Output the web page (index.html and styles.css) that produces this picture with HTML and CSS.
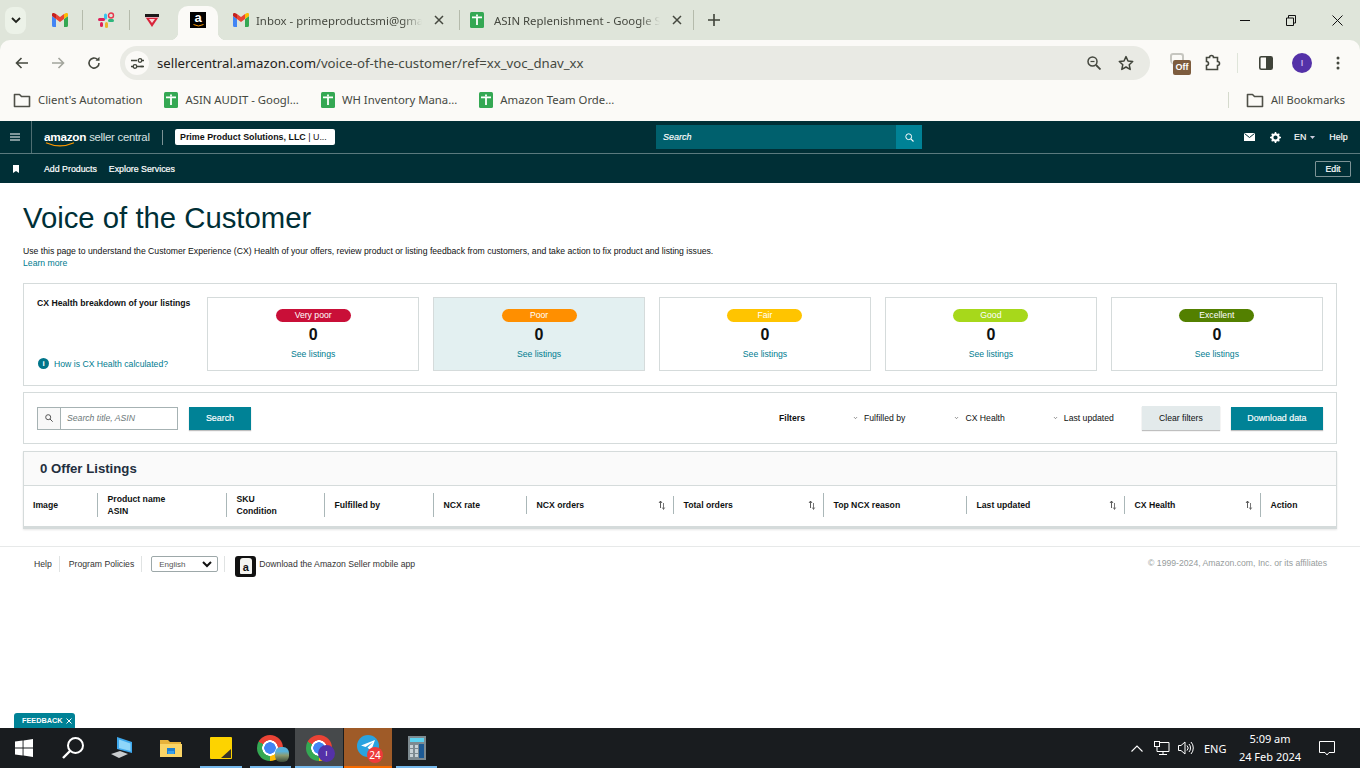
FILE: index.html
```html
<!DOCTYPE html>
<html lang="en">
<head>
<meta charset="utf-8">
<title>Voice of the Customer</title>
<link rel="stylesheet" href="styles.css">
</head>
<body>
<svg class="sprite" aria-hidden="true">
  <symbol id="sheets" viewBox="0 0 14 16"><rect width="14" height="16" rx="1.500" fill="#34a853"/><path d="M2 4.500h10v1.800H7.900V13H6.100V6.300H2z" fill="#fff"/><path d="M6.100 2.500h1.800v2H6.100z" fill="#fff"/></symbol>
  <symbol id="gmail" viewBox="0 0 16 14"><path d="M0 3v9.500A1.500 1.500 0 0 0 1.500 14H4V6z" fill="#4285f4"/><path d="M16 3v9.500a1.500 1.500 0 0 1-1.500 1.500H12V6z" fill="#34a853"/><path d="M4 6 8 9l4-3V1l-4 3-4-3z" fill="#ea4335"/><path d="M0 3 4 6V1L2.400.2A1.500 1.500 0 0 0 0 1.500z" fill="#c5221f"/><path d="M16 3 12 6V1l1.600-.8A1.500 1.500 0 0 1 16 1.500z" fill="#fbbc04"/></symbol>
  <symbol id="folder" viewBox="0 0 18 16"><path d="M1.500 2.500h5l2 2h8v10h-15z" fill="none" stroke="#4f5048" stroke-width="1.600" stroke-linejoin="round"/></symbol>
  <symbol id="close" viewBox="0 0 10 10"><path d="M1 1l8 8M9 1l-8 8" stroke="#45483f" stroke-width="1.500" fill="none"/></symbol>
  <symbol id="sort" viewBox="0 0 8 10"><path d="M2.500 8V1.500M1 3l1.500-2L4 3" stroke="#333" stroke-width=".8" fill="none"/><path d="M5.500 3v6M4.300 7.500 5.500 9.500l1.200-2" stroke="#555" stroke-width=".8" fill="none"/></symbol>
  <symbol id="caret" viewBox="0 0 8 6"><path d="M1.500 1.500 4 4l2.500-2.500" stroke="#555" fill="none"/></symbol>
</svg>

<div class="screen">
  <header class="browser">
    <div class="tabstrip">
      <button class="tab-menu"><svg width="10" height="7" viewBox="0 0 10 7"><path d="M1 1l4 4 4-4" fill="none" stroke="#20231d" stroke-width="1.800"/></svg></button>
      <div class="pin pin-first"><svg class="ic-gmail"><use href="#gmail"/></svg></div>
      <i class="tab-sep"></i>
      <div class="pin pin-wide">
        <svg width="17" height="17" viewBox="0 0 17 17"><rect x="6" y="1.500" width="3" height="6" rx="1.500" fill="#36c5f0"/><rect x="0" y="6" width="7" height="3" rx="1.500" fill="#e01e5a"/><rect x="7" y="10" width="3" height="6" rx="1.500" fill="#ecb22e"/><rect x="10" y="7" width="6" height="3" rx="1.500" fill="#2eb67d"/><rect x="2" y="10" width="3" height="5" rx="1.500" fill="#e01e5a"/><circle cx="13" cy="3.500" r="2.500" fill="none" stroke="#e8384f" stroke-width="1.400"/></svg>
      </div>
      <i class="tab-sep"></i>
      <div class="pin"><svg width="16" height="16" viewBox="0 0 16 16"><path d="M2 6h12L8 15z" fill="#d8243a"/><path d="M1 2h14v3H1z" fill="#1c1a1a"/><path d="M1.500 5h13v1h-13z" fill="#e9a0b0"/><path d="M5 7h6L8 11z" fill="#f7d9d9"/></svg></div>
      <div class="tab-active"><span class="amz-fav"><b>a</b><svg width="11" height="3" viewBox="0 0 11 3"><path d="M.5.500Q5.500 3.500 10.500.500" stroke="#f90" stroke-width="1" fill="none"/></svg></span></div>
      <div class="tab tab-inbox"><svg class="ic-gmail"><use href="#gmail"/></svg><span class="tab-title">Inbox - primeproductsmi@gma</span><svg class="tab-x"><use href="#close"/></svg></div>
      <i class="tab-sep"></i>
      <div class="tab tab-sheet"><svg class="ic-sheet"><use href="#sheets"/></svg><span class="tab-title">ASIN Replenishment - Google S</span><svg class="tab-x"><use href="#close"/></svg></div>
      <i class="tab-sep"></i>
      <svg class="new-tab" width="12" height="12" viewBox="0 0 12 12"><path d="M6 0v12M0 6h12" stroke="#3f4339" stroke-width="1.600"/></svg>
      <div class="win-controls">
        <svg width="10" height="10" viewBox="0 0 10 10"><path d="M0 5.500h10" stroke="#111"/></svg>
        <svg width="10" height="11" viewBox="0 0 10 11"><path d="M.5 3h7v7.500h-7zM2.500 3V.500h7v7.500H7.500" fill="none" stroke="#111"/></svg>
        <svg width="11" height="11" viewBox="0 0 11 11"><path d="M.5.500l10 10M10.500.500l-10 10" stroke="#111"/></svg>
      </div>
    </div>

    <div class="toolbar">
      <div class="nav-buttons">
        <svg width="14" height="12" viewBox="0 0 14 12"><path d="M13 6H2M6.500 1 1.500 6l5 5" fill="none" stroke="#45483f" stroke-width="1.600"/></svg>
        <svg width="14" height="12" viewBox="0 0 14 12"><path d="M1 6h11M7.500 1l5 5-5 5" fill="none" stroke="#a3a59d" stroke-width="1.600"/></svg>
        <svg width="14" height="14" viewBox="0 0 14 14"><path d="M12 7a5 5 0 1 1-1.500-3.500" fill="none" stroke="#45483f" stroke-width="1.600"/><path d="M12.500 .8v4h-4z" fill="#45483f"/></svg>
      </div>
      <div class="omnibox">
        <span class="site-btn"><svg width="13" height="11" viewBox="0 0 13 11"><path d="M0 2.500h6M9.500 8.500H13" stroke="#3f4339" stroke-width="1.300"/><circle cx="9" cy="2.500" r="1.800" fill="none" stroke="#3f4339" stroke-width="1.300"/><circle cx="4" cy="8.500" r="1.800" fill="none" stroke="#3f4339" stroke-width="1.300"/><path d="M0 8.500h2M11 2.500h2M6 8.500h6" stroke="#3f4339" stroke-width="1.300"/></svg></span>
        <span class="url">sellercentral.amazon.com<span class="url-path">/voice-of-the-customer/ref=xx_voc_dnav_xx</span></span>
        <span class="omni-icons">
          <svg width="14" height="14" viewBox="0 0 14 14"><circle cx="5.500" cy="5.500" r="4.500" fill="none" stroke="#45483f" stroke-width="1.500"/><path d="M9 9l4.500 4.500" stroke="#45483f" stroke-width="1.800"/><path d="M3.500 5.500h4" stroke="#45483f" stroke-width="1.200"/></svg>
          <svg width="16" height="16" viewBox="0 0 16 16"><path d="M8 1.600l2 4.400 4.700.5-3.500 3.200 1 4.700L8 12l-4.200 2.400 1-4.700L1.300 6.500 6 6z" fill="none" stroke="#3f4339" stroke-width="1.500" stroke-linejoin="round"/></svg>
        </span>
      </div>
      <div class="ext-icons">
        <span class="ext-off"><span class="off-cup"></span><b class="off-label">Off</b></span>
        <svg class="ext-puzzle" width="16" height="18" viewBox="0 0 16 18"><path d="M1.500 3.500h3a2 2 0 0 1 4 0h4v4a2 2 0 0 1 0 4v4h-11v-4a2 2 0 0 0 0-4z" fill="none" stroke="#45483f" stroke-width="1.600"/></svg>
        <i class="ext-sep"></i>
        <svg class="ext-panel" width="14" height="14" viewBox="0 0 14 14"><rect x=".8" y=".8" width="12.400" height="12.400" rx="1.500" fill="#fbfaf7" stroke="#3f4339" stroke-width="1.600"/><rect x="7" y="1" width="6" height="12" fill="#3f4339"/></svg>
        <span class="avatar">I</span>
        <svg class="ext-dots" width="4" height="14" viewBox="0 0 4 14"><circle cx="2" cy="2" r="1.500" fill="#45483f"/><circle cx="2" cy="7" r="1.500" fill="#45483f"/><circle cx="2" cy="12" r="1.500" fill="#45483f"/></svg>
      </div>
    </div>

    <div class="bookmarks">
      <span class="bm bm-first"><svg class="ic-folder"><use href="#folder"/></svg>Client's Automation</span>
      <span class="bm bm-s"><svg class="ic-sheet"><use href="#sheets"/></svg>ASIN AUDIT - Googl...</span>
      <span class="bm bm-s"><svg class="ic-sheet"><use href="#sheets"/></svg>WH Inventory Mana...</span>
      <span class="bm bm-s"><svg class="ic-sheet"><use href="#sheets"/></svg>Amazon Team Orde...</span>
      <i class="bm-sep"></i>
      <span class="bm bm-all"><svg class="ic-folder"><use href="#folder"/></svg>All Bookmarks</span>
    </div>
  </header>

  <div class="page">
    <nav class="sc-top">
      <span class="burger"><svg width="10" height="8" viewBox="0 0 10 8"><path d="M0 1h10M0 4h10M0 7h10" stroke="#fff" stroke-width="1.100"/></svg></span>
      <span class="logo"><span class="logo-mark"><b>amazon</b><svg width="30" height="5" viewBox="0 0 30 5"><path d="M1 .8Q15 7 29 .8" fill="none" stroke="#f90" stroke-width="1.100"/></svg></span><span class="logo-text">seller central</span></span>
      <i class="logo-sep"></i>
      <span class="account">Prime Product Solutions, LLC <span class="account-more">| U...</span></span>
      <div class="sc-search">
        <span class="sc-search-text">Search</span>
        <span class="sc-search-btn"><svg width="9" height="9" viewBox="0 0 9 9"><circle cx="3.700" cy="3.700" r="2.900" fill="none" stroke="#fff"/><path d="M5.800 5.800 8.500 8.500" stroke="#fff" stroke-width="1.100"/></svg></span>
      </div>
      <div class="sc-right">
        <svg class="sc-mail" width="11" height="8" viewBox="0 0 11 8"><path d="M0 0h11v8H0z" fill="#fff"/><path d="M.5.500 5.500 4.500l5-4" fill="none" stroke="#002f36"/></svg>
        <svg class="sc-gear" width="11" height="11" viewBox="0 0 11 11"><circle cx="5.500" cy="5.500" r="3.200" fill="none" stroke="#fff" stroke-width="2.200"/><path d="M5.500 0v11M0 5.500h11M1.700 1.700l7.600 7.600M9.300 1.700l-7.600 7.600" stroke="#fff" stroke-width="1.500" stroke-dasharray="2 7"/></svg>
        <span class="sc-lang">EN</span><svg class="sc-caret" width="5" height="3" viewBox="0 0 5 3"><path d="M0 0h5L2.500 3z" fill="#ccd"/></svg>
        <span class="sc-help">Help</span>
      </div>
    </nav>
    <nav class="sc-sub">
      <svg class="sc-pin" width="6" height="8" viewBox="0 0 6 8"><path d="M0 0h6v8L3 6 0 8z" fill="#fff"/></svg>
      <a class="sc-link sc-link-first">Add Products</a>
      <a class="sc-link">Explore Services</a>
      <span class="sc-edit">Edit</span>
    </nav>

    <main class="content">
      <h1 class="title">Voice of the Customer</h1>
      <p class="intro">Use this page to understand the Customer Experience (CX) Health of your offers, review product or listing feedback from customers, and take action to fix product and listing issues.<br><a class="link">Learn more</a></p>

      <section class="panel health">
        <div class="health-side">
          <strong class="health-title">CX Health breakdown of your listings</strong>
          <a class="link health-help"><span class="info-dot">i</span>How is CX Health calculated?</a>
        </div>
        <div class="health-cards">
          <div class="hcard"><span class="pill pill-vpoor">Very poor</span><b class="count">0</b><a class="link">See listings</a></div>
          <div class="hcard hcard-on"><span class="pill pill-poor">Poor</span><b class="count">0</b><a class="link">See listings</a></div>
          <div class="hcard"><span class="pill pill-fair">Fair</span><b class="count">0</b><a class="link">See listings</a></div>
          <div class="hcard"><span class="pill pill-good">Good</span><b class="count">0</b><a class="link">See listings</a></div>
          <div class="hcard"><span class="pill pill-exc">Excellent</span><b class="count">0</b><a class="link">See listings</a></div>
        </div>
      </section>

      <section class="panel filters">
        <div class="searchbox">
          <span class="searchbox-icon"><svg width="8" height="8" viewBox="0 0 8 8"><circle cx="3.200" cy="3.200" r="2.500" fill="none" stroke="#555"/><path d="M5 5l2.700 2.700" stroke="#555"/></svg></span>
          <span class="searchbox-text">Search title, ASIN</span>
        </div>
        <span class="btn btn-primary btn-search">Search</span>
        <strong class="filters-label">Filters</strong>
        <span class="filter filter-a"><svg class="ic-caret"><use href="#caret"/></svg>Fulfilled by</span>
        <span class="filter filter-b"><svg class="ic-caret"><use href="#caret"/></svg>CX Health</span>
        <span class="filter filter-c"><svg class="ic-caret"><use href="#caret"/></svg>Last updated</span>
        <span class="btn btn-clear">Clear filters</span>
        <span class="btn btn-primary btn-download">Download data</span>
      </section>

      <section class="panel listings">
        <h2 class="listings-head">0 Offer Listings</h2>
        <div class="cols">
          <div class="col col-first"><span>Image</span></div>
          <div class="col"><span>Product name<br>ASIN</span></div>
          <div class="col"><span>SKU<br>Condition</span></div>
          <div class="col"><span>Fulfilled by</span></div>
          <div class="col"><span>NCX rate</span></div>
          <div class="col col-sort"><span>NCX orders</span><svg class="ic-sort"><use href="#sort"/></svg></div>
          <div class="col col-sort"><span>Total orders</span><svg class="ic-sort"><use href="#sort"/></svg></div>
          <div class="col"><span>Top NCX reason</span></div>
          <div class="col col-sort"><span>Last updated</span><svg class="ic-sort"><use href="#sort"/></svg></div>
          <div class="col col-sort"><span>CX Health</span><svg class="ic-sort"><use href="#sort"/></svg></div>
          <div class="col"><span>Action</span></div>
        </div>
      </section>
    </main>

    <footer class="foot">
      <a class="foot-link foot-help">Help</a>
      <a class="foot-link foot-policy">Program Policies</a>
      <span class="foot-select">English<svg width="10" height="7" viewBox="0 0 10 7"><path d="M1 1l4 4 4-4" fill="none" stroke="#111" stroke-width="2"/></svg></span>
      <span class="foot-app"><span class="foot-app-icon"><b>a</b></span>Download the Amazon Seller mobile app</span>
      <span class="foot-copy">© 1999-2024, Amazon.com, Inc. or its affiliates</span>
    </footer>

    <div class="feedback">FEEDBACK<svg width="6" height="6" viewBox="0 0 6 6"><path d="M.5.500l5 5M5.500.500l-5 5" stroke="#fff"/></svg></div>
  </div>

  <footer class="taskbar">
    <span class="task task-start"><svg width="18" height="18" viewBox="0 0 18 18"><path d="M0 2.600 7.600 1.500v7H0zM8.500 1.400 18 0v8.500H8.500zM0 9.500h7.600v7L0 15.400zM8.500 9.500H18V18l-9.500-1.400z" fill="#fff"/></svg></span>
    <span class="task"><svg width="24" height="24" viewBox="0 0 24 24"><circle cx="14.500" cy="9.500" r="7.500" fill="none" stroke="#fff" stroke-width="2"/><path d="M9 15l-7 7" stroke="#fff" stroke-width="2.400"/></svg></span>
    <span class="task"><svg width="24" height="22" viewBox="0 0 24 22"><path d="M7 0l15 5v11L7 12z" fill="#3fa9ee"/><path d="M9 2.500 20.500 6.500v7.500L9 11z" fill="#8fd6fa"/><path d="M1 17l9-3 8 3-9 4z" fill="#c9ccce"/></svg></span>
    <span class="task"><svg width="22" height="18" viewBox="0 0 22 18"><path d="M0 1h8l2 2h11v14H0z" fill="#e8b33b"/><path d="M0 5h22v13H0z" fill="#fbd566"/><path d="M7 9h8v6h-2v-3H9v3H7z" fill="#1f7fd0"/><path d="M8 12h6v3H8z" fill="#3aa1ea"/></svg></span>
    <span class="task task-line"><svg width="22" height="22" viewBox="0 0 22 22"><path d="M1 0h20a1 1 0 0 1 1 1v20a1 1 0 0 1-1 1H1a1 1 0 0 1-1-1V1a1 1 0 0 1 1-1z" fill="#fdd300"/><path d="M21 12v9H11z" fill="#37342b"/></svg></span>
    <span class="task task-line"><span class="chrome"></span><span class="photo-badge"></span></span>
    <span class="task task-line task-active"><span class="chrome"></span><span class="profile-badge">I</span></span>
    <span class="task task-line task-tg"><span class="tg"><svg width="14" height="12" viewBox="0 0 14 12"><path d="M0 5.500 14 0 10 11 6.500 7.500 12 2 4.500 7z" fill="#fff"/></svg></span><span class="tg-badge">24</span></span>
    <span class="task task-line"><span class="calc"><i class="calc-screen"></i><i class="calc-keys"></i></span></span>
    <div class="tray">
      <svg class="tray-up" width="12" height="7" viewBox="0 0 12 7"><path d="M.5 6.500 6 1l5.500 5.500" fill="none" stroke="#fff" stroke-width="1.100"/></svg>
      <svg class="tray-net" width="16" height="15" viewBox="0 0 16 15"><path d="M3 1.500h12v9H3zM9 10.500v3M5 13.500h8" fill="none" stroke="#fff"/><rect x=".5" y=".5" width="5" height="5" fill="#191c1f" stroke="#fff"/></svg>
      <svg class="tray-vol" width="16" height="14" viewBox="0 0 16 14"><path d="M.5 4.500h2.500L7 1v12L3 9.500H.5z" fill="none" stroke="#fff"/><path d="M9 4.500a3.500 3.500 0 0 1 0 5M11 3a6 6 0 0 1 0 8M13 1a9 9 0 0 1 0 12" fill="none" stroke="#fff"/></svg>
      <span class="tray-lang">ENG</span>
      <span class="clock">5:09 am<br>24 Feb 2024</span>
      <svg class="tray-note" width="16" height="15" viewBox="0 0 16 15"><path d="M.5.500h15v11H10l-2 2.500L6 11.500H.5z" fill="none" stroke="#fff"/></svg>
    </div>
  </footer>
</div>
</body>
</html>
```

FILE: styles.css
```css
* { box-sizing: border-box; }
html, body { margin: 0; padding: 0; height: 100%; overflow: hidden; }
body { font-family: "Liberation Sans", Arial, sans-serif; color: #0f1111; background: #fff; }
svg { display: block; flex: none; }
a { color: inherit; }
.sprite { position: absolute; width: 0; height: 0; }
.screen { width: 1360px; height: 768px; display: flex; flex-direction: column; }

/* browser chrome */
.browser { height: 121px; background: #dfe5da; font-family: "Noto Sans", "Open Sans", sans-serif; color: #45483f; flex: none; }
.tabstrip { height: 40px; display: flex; align-items: center; padding-left: 5px; }
.tab-menu { width: 21px; height: 27px; border: 0; padding: 0; border-radius: 8px; background: #ecf2e8; display: flex; align-items: center; justify-content: center; }
.pin { width: 44px; height: 40px; display: flex; align-items: center; justify-content: center; }
.pin-first { margin-left: 12px; }
.pin-wide { width: 46px; }
.ic-gmail { width: 16px; height: 14px; }
.ic-sheet { width: 14px; height: 16px; }
.tab-sep { width: 1px; height: 20px; background: #b5bbac; flex: none; }
.tab-active { width: 40px; height: 34px; margin: 6px 0 0 4px; border-radius: 10px 10px 0 0; background: #fbfaf7; display: flex; justify-content: center; padding-top: 6px; position: relative; }
.tab-active::before, .tab-active::after { content: ""; position: absolute; bottom: 0; width: 8px; height: 8px; }
.tab-active::before { left: -8px; background: radial-gradient(circle at 0 0, transparent 8px, #fbfaf7 8.500px); }
.tab-active::after { right: -8px; background: radial-gradient(circle at 100% 0, transparent 8px, #fbfaf7 8.500px); }
.amz-fav { width: 16px; height: 16px; background: #000; display: flex; flex-direction: column; align-items: center; color: #fff; font: 700 13px/12px "Liberation Sans", sans-serif; }
.tab { height: 40px; display: flex; align-items: center; font-size: 11.400px; }
.tab-inbox { width: 241px; padding-left: 15px; }
.tab-sheet { width: 233px; padding-left: 10px; }
.tab-title { width: 166px; margin-left: 7px; white-space: nowrap; -webkit-mask-image: linear-gradient(to right, #000 88%, transparent); mask-image: linear-gradient(to right, #000 88%, transparent); }
.tab-sheet .tab-title { margin-left: 10px; }
.tab-x { width: 10px; height: 10px; margin-left: 12px; }
.new-tab { margin-left: 14px; }
.win-controls { margin-left: auto; width: 120px; padding-right: 17px; display: flex; justify-content: space-between; align-items: center; }

.toolbar { height: 41px; background: #fbfaf7; border-radius: 10px 10px 0 0; display: flex; align-items: center; }
.nav-buttons { width: 120px; padding: 0 19px 0 15px; display: flex; justify-content: space-between; align-items: center; }
.omnibox { width: 1030px; height: 34px; margin-top: 5px; border-radius: 17px; background: #e9eae4; display: flex; align-items: center; padding: 0 16px 0 5px; }
.nav-buttons, .ext-icons { margin-top: 4px; }
.site-btn { width: 24px; height: 24px; border-radius: 50%; background: #fbfaf7; display: flex; align-items: center; justify-content: center; }
.url { margin-left: 8px; font-size: 13.200px; color: #1f2119; white-space: nowrap; }
.url-path { color: #45483f; }
.omni-icons { margin-left: auto; width: 47px; display: flex; justify-content: space-between; align-items: center; }
.ext-icons { flex: 1; display: flex; align-items: center; height: 34px; }
.ext-off { width: 21px; height: 21px; margin-left: 20px; position: relative; }
.off-cup { position: absolute; left: 0; top: 1px; width: 14px; height: 12px; border: 2px solid #c6c6c0; border-radius: 3px 3px 5px 5px; border-bottom: 0; }
.off-label { position: absolute; right: 0; bottom: -2px; width: 18px; height: 15px; border-radius: 2px; background: #7d5c3e; color: #fff; font: 700 9px/15px "Liberation Sans", sans-serif; text-align: center; }
.ext-puzzle { margin-left: 14px; }
.ext-sep { width: 1px; height: 20px; background: #dfe5da; margin-left: 16px; }
.ext-panel { margin-left: 21px; }
.avatar { width: 20px; height: 20px; margin-left: 19px; border-radius: 50%; background: #5431a8; color: #e8e0ff; font: 9px/20px "Liberation Sans", sans-serif; text-align: center; }
.ext-dots { margin-left: 24px; }

.bookmarks { height: 40px; background: #fbfaf7; display: flex; align-items: center; font-size: 11.350px; padding-bottom: 3px; }
.bm { display: flex; align-items: center; gap: 7px; white-space: nowrap; }
.ic-folder { width: 18px; height: 16px; }
.bm-first { margin-left: 13px; }
.bm-s { margin-left: 22px; }
.bm-sep { width: 1px; height: 16px; background: #d5dacd; margin-left: auto; }
.bm-all { margin-left: 17px; margin-right: 15px; font-size: 11px; }

/* seller central nav */
.page { flex: 1; position: relative; display: flex; flex-direction: column; min-height: 0; background: #fff; }
.sc-top { height: 33px; background: #002f36; border-bottom: 1px solid #5b7a7e; display: flex; align-items: center; color: #fff; flex: none; }
.burger { width: 32px; height: 32px; border-right: 1px solid #4f6e72; padding-left: 10px; display: flex; align-items: center; }
.logo { display: flex; align-items: flex-start; margin-left: 12px; width: 106px; height: 18px; padding-top: 2px; white-space: nowrap; }
.logo-mark { position: relative; display: block; font-size: 11.800px; line-height: 15px; letter-spacing: -.3px; }
.logo-mark svg { position: absolute; left: 1px; top: 12px; }
.logo-text { font-size: 11.300px; line-height: 15px; letter-spacing: -.25px; margin-left: 3px; color: #d9e2e3; }
.logo-sep { width: 1px; height: 15px; background: #7d9396; margin-left: 12px; }
.account { width: 160px; height: 16px; margin-left: 12px; background: #fff; border-radius: 2px; color: #111; font-size: 8.900px; font-weight: 700; line-height: 16px; padding-left: 5px; white-space: nowrap; }
.account-more { font-weight: 400; }
.sc-search { width: 266px; height: 24px; margin-left: 321px; background: #00606d; display: flex; align-items: center; justify-content: space-between; padding-left: 7px; }
.sc-search-text { font-size: 9px; font-style: italic; -webkit-text-stroke: .15px #fff; }
.sc-search-btn { width: 26px; height: 24px; background: #008296; display: flex; align-items: center; justify-content: center; }
.sc-right { flex: 1; display: flex; align-items: center; font-size: 8.900px; -webkit-text-stroke: .15px #fff; }
.sc-mail { margin-left: 322px; }
.sc-gear { margin-left: 15px; }
.sc-lang { margin-left: 13px; }
.sc-caret { margin-left: 4px; }
.sc-help { margin-left: 14px; }
.sc-sub { height: 29px; background: #002f36; display: flex; align-items: center; color: #fff; font-size: 8.800px; -webkit-text-stroke: .2px #fff; flex: none; }
.sc-pin { margin-left: 13px; }
.sc-link-first { margin-left: 25px; }
.sc-link { margin-right: 12px; white-space: nowrap; }
.sc-edit { margin-left: auto; margin-right: 9px; width: 36px; height: 16px; border: 1px solid #7d9396; border-radius: 1px; text-align: center; line-height: 14px; }

/* content */
.content { padding: 0 23px; flex: none; }
.title { margin: 17px 0 0; font-size: 29.300px; line-height: 35px; font-weight: 400; color: #002f36; white-space: nowrap; }
.intro { margin: 10px 0 0; font-size: 8.670px; line-height: 12px; color: #0f1111; white-space: nowrap; }
.link { color: #007c90; }
.panel { border: 1px solid #d5dbdb; background: #fff; }
.health { height: 103px; margin-top: 14px; padding: 13px 13px 14px; display: flex; }
.health-side { width: 170px; display: flex; flex-direction: column; justify-content: space-between; font-size: 8.670px; flex: none; }
.health-title { display: block; margin-top: 1px; white-space: nowrap; }
.health-help { display: flex; align-items: center; gap: 5px; margin: 0 0 2px 1px; white-space: nowrap; }
.info-dot { width: 11px; height: 11px; border-radius: 50%; background: #00758a; color: #fff; font: 700 8px/11px "Liberation Sans", sans-serif; text-align: center; }
.health-cards { flex: 1; display: grid; grid-template-columns: repeat(5, 1fr); column-gap: 13.600px; }
.hcard { border: 1px solid #d5dbdb; display: flex; flex-direction: column; align-items: center; padding-top: 11px; font-size: 8.670px; }
.hcard-on { background: #e3f0f1; }
.pill { width: 75px; height: 13px; border-radius: 7px; color: #fff; text-align: center; line-height: 13px; }
.pill-vpoor { background: #c90f38; }
.pill-poor { background: #ff8f00; }
.pill-fair { background: #ffc400; }
.pill-good { background: #a7d81b; }
.pill-exc { background: #538000; }
.count { font-size: 16px; line-height: 18px; margin: 4px 0 5px; color: #0f1111; }

.filters { height: 52px; margin-top: 6px; padding: 0 13px; display: flex; align-items: center; font-size: 8.670px; }
.searchbox { width: 141px; height: 23px; border: 1px solid #a6b2b3; display: flex; align-items: center; flex: none; }
.searchbox-icon { width: 23px; height: 21px; background: #f8f8f8; border-right: 1px solid #a6b2b3; display: flex; align-items: center; justify-content: center; }
.searchbox-text { margin-left: 6px; font-style: italic; color: #6c7778; }
.btn { height: 23px; display: flex; align-items: center; justify-content: center; flex: none; box-shadow: 0 1px 1px rgba(0,0,0,.25); }
.btn-primary { background: #008296; color: #fff; font-size: 8.900px; -webkit-text-stroke: .15px #fff; }
.btn-search { width: 62px; margin-left: 11px; }
.filters-label { margin-left: 528px; width: 26px; }
.filter { display: flex; align-items: center; gap: 6px; white-space: nowrap; }
.ic-caret { width: 5px; height: 4px; }
.filter-a { margin-left: 48px; }
.filter-b { margin-left: 49px; }
.filter-c { margin-left: 48px; }
.btn-clear { width: 78px; height: 24px; margin-left: 28px; background: #e3eaeb; color: #0f1111; }
.btn-download { width: 92px; margin-left: 11px; }

.listings { height: 78px; margin-top: 7px; border-bottom: 3px solid #d5dbdb; box-shadow: 0 1px 2px rgba(0,0,0,.1); }
.listings-head { height: 34px; margin: 0; padding-left: 16px; border-bottom: 1px solid #d5dbdb; background: #fafafa; font-size: 13.200px; line-height: 34px; font-weight: 700; color: #232f3e; }
.cols { display: grid; grid-template-columns: 73px 129px 98px 109px 93px 147px 150px 143px 158px 136px 76px; height: 38px; align-items: center; font-size: 8.670px; font-weight: 700; line-height: 12px; }
.col { height: 24px; border-left: 1px solid #aab7b8; padding-left: 9.500px; display: flex; align-items: center; }
.col-first { border-left: 0; padding-left: 9px; }
.col-sort { justify-content: space-between; padding-right: 7px; height: 18px; }
.ic-sort { width: 8px; height: 10px; }

/* footer */
.foot { margin-top: 17px; height: 39px; border-top: 1px solid #e7e9e9; display: flex; align-items: flex-start; padding-top: 9px; font-size: 8.670px; color: #333; flex: none; }
.foot-link { line-height: 16px; padding-right: 7px; border-right: 1px solid #e0e3e3; height: 16px; }
.foot-help { margin-left: 34px; }
.foot-policy { margin-left: 9px; }
.foot-select { width: 67px; height: 16px; margin-left: 9px; border: 1px solid #9da8a9; border-radius: 2px; display: flex; align-items: center; justify-content: space-between; padding: 0 5px 0 7px; font-size: 8px; color: #555; }
.foot-app { margin-left: 6px; padding-left: 10px; border-left: 1px solid #e0e3e3; height: 16px; display: flex; align-items: center; white-space: nowrap; gap: 3px; }
.foot-app-icon { width: 21px; height: 21px; margin-top: 4px; border-radius: 3px; background: #111; display: flex; align-items: center; justify-content: center; color: #111; font-size: 11px; }
.foot-app-icon b { width: 12px; height: 16px; background: #f4f4f0; border-radius: 3px 3px 1px 1px; text-align: center; line-height: 18px; }
.foot-copy { margin-left: auto; margin-right: 33px; color: #969c9c; line-height: 14px; white-space: nowrap; }
.feedback { position: absolute; left: 14px; bottom: 0; width: 61px; height: 15px; background: #008296; border-radius: 3px 3px 0 0; display: flex; align-items: center; gap: 3px; padding-left: 8px; color: #fff; font-size: 7.300px; font-weight: 700; }

/* taskbar */
.taskbar { height: 40px; background: #191c1f; display: flex; align-items: stretch; color: #fff; font-family: "Noto Sans", "Open Sans", sans-serif; flex: none; }
.task { width: 49.400px; display: flex; align-items: center; justify-content: center; position: relative; flex: none; }
.task-start { width: 48px; }
.task-line::after { content: ""; position: absolute; left: 4px; right: 4px; bottom: 0; height: 2px; background: #76b9ed; }
.task-active { background: #46494b; width: 48px; }
.task-active::after { left: 0; right: 0; }
.task-tg { background: #9f5b28; width: 48px; margin-left: 1px; }
.task-tg::after { left: 0; right: 0; background: #f76b00; }
.chrome { width: 26px; height: 26px; border-radius: 50%; background: radial-gradient(circle, #4285f4 0 5.500px, #fff 6px 7.500px, transparent 8px), conic-gradient(#ea4335 0 120deg, #fbbc04 120deg 180deg, #34a853 180deg 300deg, #ea4335 300deg); }
.photo-badge { position: absolute; right: 6px; bottom: 6px; width: 14px; height: 15px; border-radius: 40%; background: linear-gradient(#58b0d8 30%, #8b9c72 55%, #3b4a3a); }
.profile-badge { position: absolute; left: 23px; top: 17px; width: 17px; height: 17px; border-radius: 50%; background: #5431a8; font: 8px/17px "Liberation Sans", sans-serif; text-align: center; }
.tg { width: 22px; height: 22px; border-radius: 50%; background: #2aa3e0; display: flex; align-items: center; justify-content: center; margin-top: -4px; }
.tg-badge { position: absolute; left: 23px; top: 19px; width: 16px; height: 16px; border-radius: 50%; background: #ee3a3a; font-size: 10px; line-height: 16px; text-align: center; }
.calc { width: 18px; height: 24px; background: #7d8a90; padding: 2px; display: flex; flex-direction: column; gap: 2px; }
.calc-screen { height: 4px; background: #5cd2f0; display: block; }
.calc-keys { flex: 1; display: block; background: linear-gradient(90deg, transparent 67%, #1d5a94 67%), repeating-linear-gradient(0deg, #7d8a90 0 1px, transparent 1px 4.300px), repeating-linear-gradient(90deg, #c8d2d6 0 3px, #7d8a90 3px 4.600px); }
.tray { flex: 1; display: flex; align-items: center; font-size: 11px; padding-right: 25px; }
.tray-up { margin-left: auto; }
.tray-net { margin-left: 11px; }
.tray-vol { margin-left: 8px; }
.tray-lang { margin-left: 10px; width: 24px; }
.clock { margin-left: 9px; width: 66px; text-align: center; line-height: 18px; white-space: nowrap; }
.tray-note { margin-left: 16px; }
```
